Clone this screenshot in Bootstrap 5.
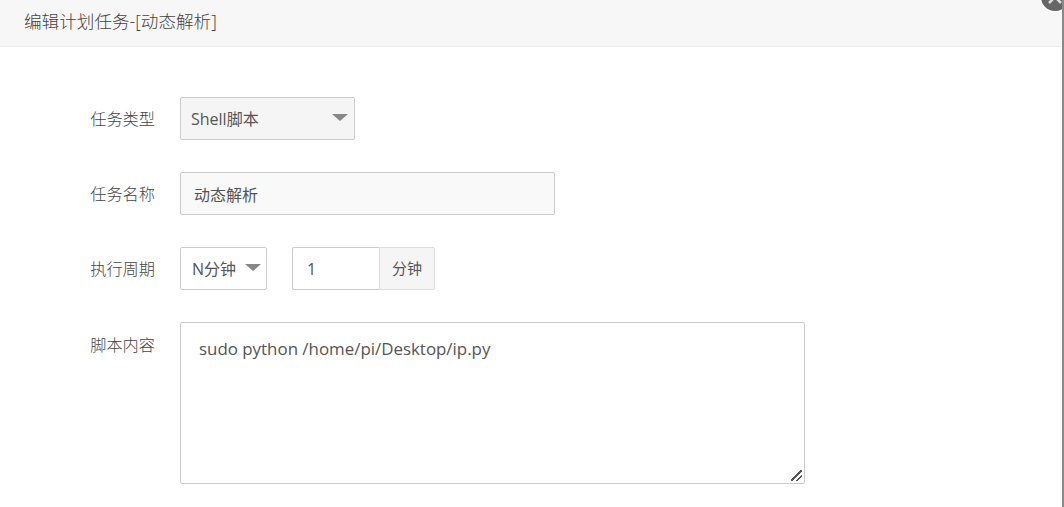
<!DOCTYPE html>
<html lang="zh">
<head>
<meta charset="utf-8">
<title>编辑计划任务</title>
<link href="https://cdn.jsdelivr.net/npm/bootstrap@5.3.0/dist/css/bootstrap.min.css" rel="stylesheet">
<style>
html,body{height:507px;overflow:hidden;background:#fff}
body{font-family:"Open Sans","Noto Sans CJK SC",sans-serif;font-size:16px;color:#555}
.shell{height:507px;border-right:2px solid #8a8a8a;position:relative;overflow:hidden}
.head-bar{height:47px;background:#f7f7f7;border-bottom:1px solid #eee;padding:0 24px;line-height:43px;font-size:17.6px;font-weight:300;color:#444}
.close-dot{position:absolute;right:-9px;top:-19px;width:32px;height:32px;display:block}
.form-body{padding-top:50px}
.line{display:flex;margin-bottom:32px}
.lab{width:155px;text-align:right;font-size:16.2px;line-height:44px;height:43px;flex:none;font-weight:300;color:#444}
.lab-top{line-height:46px}
.fields{margin-left:25px;display:flex}
.pick{height:43px;border:1px solid #ccc;border-radius:2px;color:#555;font-size:16px;display:flex;align-items:center;justify-content:space-between;padding:0 0 0 10px}
.pick::after{border-top:7px solid #888;border-left:8px solid transparent;border-right:8px solid transparent;border-bottom:0;margin:0 6px 2px 0}
.pick-type{width:175px;background:#f5f5f5}
.pick-cycle{width:87px;background:#fff;padding-left:11px}
.pick-cycle::after{margin-right:5px}
.plain-input{height:43px;width:375px;border:1px solid #ccc;border-radius:2px;background:#f9f9f9;padding:0 13px;font-size:16px;color:#555}
.unit-wrap{margin-left:25px;display:flex;height:43px}
.num-input{width:87px;height:43px;border:1px solid #ccc;border-right:0;border-radius:2px 0 0 2px;padding:0 14px;font-size:16px;color:#555}
.unit{width:56px;border:1px solid #ddd;border-radius:0 2px 2px 0;background:#f5f5f5;text-align:center;line-height:41px;font-size:15px;color:#555}
.script-box{width:625px;height:162px;border:1px solid #ccc;border-radius:2px;padding:14px 18px;font-size:16.9px;line-height:24px;color:#555;resize:both;outline:0}
.script-box::-webkit-resizer{background:linear-gradient(135deg,transparent 45%,#555 45%,#555 55%,transparent 55%,transparent 70%,#555 70%,#555 80%,transparent 80%) 2px 2px/11px 11px no-repeat}
</style>
</head>
<body>
<div class="shell">
  <div class="head-bar">编辑计划任务-[动态解析]</div>
  <svg class="close-dot" viewBox="0 0 32 32" aria-hidden="true"><circle cx="16" cy="16" r="16" fill="#fff"/><circle cx="16" cy="16" r="14" fill="#666"/><path d="M10 10 22 22M22 10 10 22" stroke="#ddd" stroke-width="2.5"/></svg>
  <form class="form-body">
    <div class="line">
      <div class="lab">任务类型</div>
      <div class="fields"><button type="button" class="btn dropdown-toggle pick pick-type">Shell脚本</button></div>
    </div>
    <div class="line">
      <div class="lab">任务名称</div>
      <div class="fields"><input class="plain-input" type="text" value="动态解析"></div>
    </div>
    <div class="line">
      <div class="lab">执行周期</div>
      <div class="fields">
        <button type="button" class="btn dropdown-toggle pick pick-cycle">N分钟</button>
        <div class="unit-wrap"><input class="num-input" type="text" value="1"><span class="unit">分钟</span></div>
      </div>
    </div>
    <div class="line">
      <div class="lab lab-top">脚本内容</div>
      <div class="fields"><textarea class="script-box">sudo python /home/pi/Desktop/ip.py</textarea></div>
    </div>
  </form>
</div>
<script src="https://cdn.jsdelivr.net/npm/bootstrap@5.3.0/dist/js/bootstrap.bundle.min.js"></script>
</body>
</html>
